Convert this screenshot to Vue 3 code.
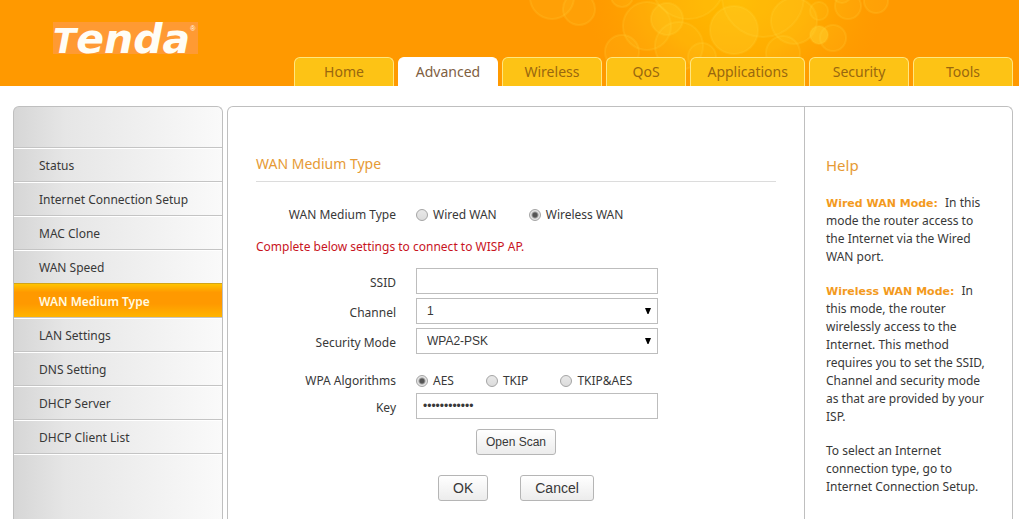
<script setup>
import { ref } from 'vue'

const tabs = [
  { name: 'Home', size: 'regular' },
  { name: 'Advanced', size: 'regular', active: true },
  { name: 'Wireless', size: 'regular' },
  { name: 'QoS', size: 'narrow' },
  { name: 'Applications', size: 'wide' },
  { name: 'Security', size: 'regular' },
  { name: 'Tools', size: 'regular' }
]

const menu = [
  'Status',
  'Internet Connection Setup',
  'MAC Clone',
  'WAN Speed',
  'WAN Medium Type',
  'LAN Settings',
  'DNS Setting',
  'DHCP Server',
  'DHCP Client List'
]
const current = 'WAN Medium Type'

const medium = ref('wireless')
const ssid = ref('')
const channel = ref('1')
const security = ref('WPA2-PSK')
const algorithm = ref('AES')
const key = ref('123456789012')
</script>

<template>
  <div class="page">
    <header class="banner">
      <svg class="bubbles" viewBox="0 0 400 86" aria-hidden="true">
        <defs>
          <radialGradient id="glow">
            <stop offset="0" stop-color="#ffc400" stop-opacity="0.8" />
            <stop offset="0.5" stop-color="#ffb800" stop-opacity="0.65" />
            <stop offset="1" stop-color="#ffa400" stop-opacity="0" />
          </radialGradient>
        </defs>
        <ellipse cx="255" cy="0" rx="150" ry="110" fill="url(#glow)" />
        <g fill="#ffd22e" fill-opacity="0.12" stroke="#ffe04a" stroke-opacity="0.16" stroke-width="2">
          <circle cx="72" cy="-3" r="22" />
          <circle cx="99" cy="9" r="16" />
          <circle cx="142" cy="-4" r="11" />
          <circle cx="167" cy="26" r="24" />
          <circle cx="187" cy="19" r="16" fill-opacity="0.25" />
          <circle cx="208" cy="-18" r="37" />
          <circle cx="142" cy="52" r="17" />
          <circle cx="199" cy="46" r="24" />
          <circle cx="222" cy="57" r="14" />
          <circle cx="254" cy="30" r="24" fill-opacity="0.3" />
          <circle cx="283" cy="-4" r="41" />
          <circle cx="314" cy="21" r="23" fill-opacity="0.2" />
          <circle cx="303" cy="53" r="17" />
          <circle cx="339" cy="11" r="9" />
          <circle cx="339" cy="35" r="9" fill-opacity="0.5" />
          <circle cx="353" cy="38" r="13" />
          <circle cx="368" cy="6" r="13" />
          <circle cx="362" cy="-6" r="9" />
          <circle cx="396" cy="1" r="12" />
        </g>
      </svg>
      <a class="logo" href="#"><span class="initial">T</span>enda<sup>®</sup></a>
      <nav class="tabs">
        <a
          v-for="tab in tabs"
          :key="tab.name"
          href="#"
          class="tab"
          :class="[tab.size, { active: tab.active }]"
        >{{ tab.name }}</a>
      </nav>
    </header>

    <div class="body">
      <nav class="sidebar">
        <a
          v-for="item in menu"
          :key="item"
          href="#"
          class="item"
          :class="{ current: item === current }"
        >{{ item }}</a>
      </nav>

      <div class="panel">
        <main class="content">
          <h1>WAN Medium Type</h1>
          <form @submit.prevent>
            <div class="row medium" role="radiogroup" aria-labelledby="medium-label">
              <span id="medium-label" class="label">WAN Medium Type</span>
              <div class="choices">
                <label><input v-model="medium" type="radio" name="medium" value="wired">Wired WAN</label>
                <label><input v-model="medium" type="radio" name="medium" value="wireless">Wireless WAN</label>
              </div>
            </div>

            <p class="notice">Complete below settings to connect to WISP AP.</p>

            <div class="fields">
              <div class="row">
                <label class="label" for="ssid">SSID</label>
                <input id="ssid" v-model="ssid" class="box" type="text">
              </div>
              <div class="row">
                <label class="label" for="channel">Channel</label>
                <div class="picker">
                  <select id="channel" v-model="channel" class="box">
                    <option>1</option>
                  </select>
                  <svg class="arrow" viewBox="0 0 6 6" aria-hidden="true"><path d="M0 0H6L3.5 6H2.5Z" /></svg>
                </div>
              </div>
              <div class="row">
                <label class="label" for="security">Security Mode</label>
                <div class="picker">
                  <select id="security" v-model="security" class="box">
                    <option>WPA2-PSK</option>
                  </select>
                  <svg class="arrow" viewBox="0 0 6 6" aria-hidden="true"><path d="M0 0H6L3.5 6H2.5Z" /></svg>
                </div>
              </div>
            </div>

            <div class="row algorithms" role="radiogroup" aria-labelledby="algorithm-label">
              <span id="algorithm-label" class="label">WPA Algorithms</span>
              <div class="choices">
                <label><input v-model="algorithm" type="radio" name="algorithm" value="AES">AES</label>
                <label><input v-model="algorithm" type="radio" name="algorithm" value="TKIP">TKIP</label>
                <label><input v-model="algorithm" type="radio" name="algorithm" value="TKIP&AES">TKIP&amp;AES</label>
              </div>
            </div>
            <div class="row">
              <label class="label" for="key">Key</label>
              <input id="key" v-model="key" class="box" type="password">
            </div>

            <div class="scan"><button type="button" class="small">Open Scan</button></div>
            <div class="actions">
              <button type="submit">OK</button>
              <button type="button">Cancel</button>
            </div>
          </form>
        </main>

        <aside class="help">
          <h2>Help</h2>
          <p>
            <strong>Wired WAN Mode:</strong> In this<br>
            mode the router access to<br>
            the Internet via the Wired<br>
            WAN port.
          </p>
          <p>
            <strong>Wireless WAN Mode:</strong> In<br>
            this mode, the router<br>
            wirelessly access to the<br>
            Internet. This method<br>
            requires you to set the SSID,<br>
            Channel and security mode<br>
            as that are provided by your<br>
            ISP.
          </p>
          <p>
            To select an Internet<br>
            connection type, go to<br>
            Internet Connection Setup.
          </p>
        </aside>
      </div>
    </div>
  </div>
</template>

<style>
body {
  background: #fff;
}
</style>

<style scoped>
.page {
  box-sizing: border-box;
  min-height: 100vh;
  display: flex;
  flex-direction: column;
  font: 12px/18px "Noto Sans", "Open Sans", sans-serif;
  color: #383838;
}

a {
  text-decoration: none;
}

.banner {
  position: relative;
  display: flex;
  align-items: flex-end;
  height: 86px;
  padding-right: 6px;
  background: #ff9900;
  overflow: hidden;
}

.bubbles {
  position: absolute;
  top: 0;
  right: 139px;
  width: 400px;
  height: 86px;
  overflow: visible;
}

.logo {
  flex: none;
  display: flex;
  align-items: baseline;
  box-sizing: border-box;
  width: 145px;
  height: 32px;
  margin: 0 96px 32px 53px;
  background: #ff9a33;
  color: #fffdf5;
  font: italic bold 41px/34px "DejaVu Sans", sans-serif;
}

.initial {
  font-size: 34px;
}

.logo sup {
  align-self: flex-start;
  font: 7px/14px "Liberation Sans", sans-serif;
}

.tabs {
  position: relative;
  flex: 1;
  display: flex;
  gap: 4px;
}

.tab {
  flex: 100 1 0;
  box-sizing: border-box;
  height: 29px;
  border: 1px solid #ffe680;
  border-bottom: 0;
  border-radius: 6px 6px 0 0;
  background: #fdc315;
  color: #99670f;
  font-size: 14px;
  line-height: 28px;
  text-align: center;
}

.tab.narrow {
  flex-grow: 80;
}

.tab.wide {
  flex-grow: 115;
}

.tab.active {
  border-color: #fff;
  background: #fff;
  color: #80603f;
}

.body {
  flex: 1;
  display: flex;
  gap: 4px;
  padding: 20px 6px 0 13px;
}

.sidebar {
  flex: none;
  box-sizing: border-box;
  width: 210px;
  padding-top: 40px;
  border: 1px solid #bfbfbf;
  border-bottom: 0;
  border-radius: 6px 6px 0 0;
  background: linear-gradient(to right, #d6d6d6, #e6e6e6 25%, #fafafa);
}

.item {
  display: block;
  box-sizing: border-box;
  height: 34px;
  padding-left: 25px;
  border-top: 1px solid #c4c4c4;
  box-shadow: inset 0 1px #fff;
  color: #383838;
  line-height: 36px;
}

.item:last-child {
  height: 35px;
  border-bottom: 1px solid #c4c4c4;
  box-shadow: inset 0 1px #fff, 0 1px #fff;
}

.item.current {
  border-top-color: #d3a417;
  background: linear-gradient(#ffc400, #ff9900 25%, #ff9900 60%, #ffb400);
  box-shadow: none;
  color: #fffbe0;
  font-weight: 600;
}

.panel {
  flex: 1;
  display: flex;
  border: 1px solid #bfbfbf;
  border-bottom: 0;
  border-radius: 6px 6px 0 0;
}

.content {
  flex: 1;
  padding: 46px 28px 0;
}

h1 {
  margin: 0;
  padding-bottom: 7px;
  border-bottom: 1px solid #dcdcdc;
  color: #e69a35;
  font-size: 14px;
  font-weight: normal;
  line-height: 21px;
}

.row {
  display: flex;
  align-items: center;
  gap: 20px;
}

.label {
  width: 140px;
  padding-top: 3px;
  text-align: right;
}

.medium {
  margin-top: 24px;
}

.medium .label,
.algorithms .label {
  padding-top: 0;
}

.choices {
  display: flex;
  gap: 32px;
}

.choices label {
  display: flex;
  align-items: center;
  gap: 5px;
}

.choices input {
  appearance: none;
  box-sizing: border-box;
  width: 12px;
  height: 12px;
  margin: 0;
  border: 1px solid #a4a4a4;
  border-radius: 50%;
  background: linear-gradient(#e8e8e8, #dcdcdc);
}

.choices input:checked {
  background: radial-gradient(circle, #555 2px, #e4e4e4 4px);
}

.notice {
  margin: 14px 0 12px;
  color: #c8141e;
}

.fields {
  display: flex;
  flex-direction: column;
  gap: 4px;
}

.box {
  box-sizing: border-box;
  width: 242px;
  height: 26px;
  padding: 0 10px;
  border: 1px solid #bdbdbd;
  border-radius: 0;
  background: #fff;
  color: #383838;
  font: 12px "Liberation Sans", Arial, sans-serif;
  appearance: none;
}

input.box {
  padding: 0 6px;
}

.picker {
  position: relative;
  display: flex;
}

.arrow {
  position: absolute;
  top: 10px;
  right: 7px;
  width: 6px;
  height: 6px;
  pointer-events: none;
}

.algorithms {
  margin: 18px 0 3px;
}

.scan {
  padding: 10px 0 20px 220px;
}

.actions {
  display: flex;
  gap: 32px;
  padding-left: 182px;
}

button {
  display: block;
  height: 26px;
  padding: 0 14px;
  border: 1px solid #b5b5b5;
  border-radius: 3px;
  background: linear-gradient(#fff, #ececec);
  color: #383838;
  font: 14px "Liberation Sans", Arial, sans-serif;
}

.small {
  padding: 0 9px;
  font-size: 12px;
}

.help {
  flex: none;
  box-sizing: border-box;
  width: 208px;
  padding: 48px 16px 0 21px;
  border-left: 1px solid #bfbfbf;
}

h2 {
  margin: 0 0 18px;
  color: #e69a35;
  font-size: 15px;
  font-weight: normal;
  line-height: 21px;
}

.help p {
  margin: 0 0 16px;
}

.help strong {
  margin-right: 4px;
  color: #f39a1d;
  font-family: "DejaVu Sans", sans-serif;
  font-size: 11px;
  line-height: 16px;
}
</style>
